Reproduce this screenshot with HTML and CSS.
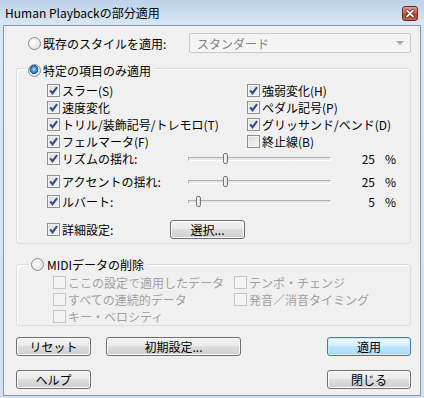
FILE: index.html
```html
<!DOCTYPE html>
<html lang="ja">
<head>
    <meta charset="UTF-8">
    <title>Human Playbackの部分適用</title>
    <link rel="stylesheet" href="styles.css">
</head>
<body>
    <div class="window">
        <div class="titlebar">
            <span class="title">Human Playbackの部分適用</span>
            <span class="close-btn">
                <svg viewBox="0 0 16 15" width="16" height="15">
                    <path d="M5 4.5l6 6M11 4.5l-6 6" stroke="#5a1a10" stroke-width="3.4" stroke-linecap="round"></path>
                    <path d="M5 4.5l6 6M11 4.5l-6 6" stroke="#fff" stroke-width="1.8" stroke-linecap="round"></path>
                </svg>
            </span>
        </div>

        <div class="client">
            <div class="style-row">
                <label class="opt"><span class="radio"></span>既存のスタイルを適用:</label>
                <div class="combo">
                    <span>スタンダード</span>
                    <span class="combo-arrow"></span>
                </div>
            </div>

            <!-- specific items -->
            <div class="group group-items">
                <div class="legend"><span class="radio on"></span>特定の項目のみ適用</div>
                <div class="check-grid">
                    <label class="chk"><span class="box on"></span>スラー(S)</label>
                    <label class="chk"><span class="box on"></span>強弱変化(H)</label>
                    <label class="chk"><span class="box on"></span>速度変化</label>
                    <label class="chk"><span class="box on"></span>ペダル記号(P)</label>
                    <label class="chk"><span class="box on"></span>トリル/装飾記号/トレモロ(T)</label>
                    <label class="chk"><span class="box on"></span>グリッサンド/ベンド(D)</label>
                    <label class="chk"><span class="box on"></span>フェルマータ(F)</label>
                    <label class="chk"><span class="box"></span>終止線(B)</label>
                </div>

                <div class="slider-row">
                    <label class="chk"><span class="box on"></span>リズムの揺れ:</label>
                    <div class="slider"><span class="thumb" style="left: 34px"></span></div>
                    <span class="value">25</span><span class="pct">%</span>
                </div>
                <div class="slider-row row-accent">
                    <label class="chk"><span class="box on"></span>アクセントの揺れ:</label>
                    <div class="slider"><span class="thumb" style="left: 34px"></span></div>
                    <span class="value">25</span><span class="pct">%</span>
                </div>
                <div class="slider-row row-rubato">
                    <label class="chk"><span class="box on"></span>ルバート:</label>
                    <div class="slider"><span class="thumb" style="left: 7px"></span></div>
                    <span class="value">5</span><span class="pct">%</span>
                </div>

                <div class="detail-row">
                    <label class="chk"><span class="box on"></span>詳細設定:</label>
                    <button class="btn btn-select">選択...</button>
                </div>
            </div>

            <!-- MIDI data removal -->
            <div class="group group-midi">
                <div class="legend"><span class="radio"></span>MIDIデータの削除</div>
                <div class="midi-grid">
                    <label class="chk off"><span class="box"></span>ここの設定で適用したデータ</label>
                    <label class="chk off"><span class="box"></span>テンポ・チェンジ</label>
                    <label class="chk off"><span class="box"></span>すべての連続的データ</label>
                    <label class="chk off"><span class="box"></span>発音／消音タイミング</label>
                    <label class="chk off"><span class="box"></span>キー・ベロシティ</label>
                </div>
            </div>

            <div class="btn-row">
                <button class="btn btn-small">リセット</button>
                <button class="btn btn-wide">初期設定...</button>
                <button class="btn btn-right btn-default">適用</button>
            </div>
            <div class="btn-row btn-row-last">
                <button class="btn btn-small">ヘルプ</button>
                <button class="btn btn-right">閉じる</button>
            </div>
        </div>
    </div>
</body>
</html>
```

FILE: styles.css
```css
:root {
    --face: #f0f0f0;
    --text: #000;
    --text-disabled: #a0a0a0;
    --group-line: #d5dfe5;
    --frame-top: #bcd1ea;
    --frame-bottom: #d3e1f1;
}
* { box-sizing: border-box; }
body {
    margin: 0;
    font-family: "Noto Sans CJK JP", "Noto Sans", sans-serif;
    font-size: 12px;
    color: var(--text);
    background: var(--frame-bottom);
}
.window {
    width: 424px;
    height: 398px;
    display: flex;
    flex-direction: column;
    padding: 0 3px 2px 3px;
    background: linear-gradient(var(--frame-top), #d9e6f4 24px, var(--frame-bottom));
}

/* title bar */
.titlebar {
    height: 25px;
    display: flex;
    align-items: flex-start;
    justify-content: space-between;
    padding-left: 2px;
}
.title {
    font-size: 12px;
    line-height: 13px;
    margin-top: 6px;
}
.close-btn {
    width: 16px;
    height: 15px;
    margin-top: 6px;
    margin-right: 3px;
    border: 1px solid #6b2a1e;
    border-radius: 3px;
    background: linear-gradient(#e0a294, #cc6a55 45%, #b8432c 55%, #c8624a);
    display: flex;
}
.close-btn svg { display: block; margin: -1px; }

/* client area */
.client {
    flex: 1;
    background: var(--face);
    border: 1px solid #8597ab;
    padding: 7px 9px 0 12px;
    line-height: 13px;
}
.style-row {
    display: flex;
    align-items: center;
    height: 20px;
}
.opt {
    display: flex;
    align-items: center;
    gap: 2px;
    margin-left: 12px;
}
.radio {
    width: 13px;
    height: 13px;
    border-radius: 50%;
    border: 1px solid #8e8f8f;
    background: radial-gradient(circle at 40% 40%, #fff, #e4e4e4 70%, #d0d0d0);
    flex-shrink: 0;
}
.radio.on {
    background:
        radial-gradient(circle at 45% 40%, #bfe4f8 0, #3a8ad0 30%, #1a4f92 48%, transparent 52%),
        radial-gradient(circle at 40% 40%, #fff, #e4e4e4 70%, #d0d0d0);
}
.combo {
    margin-left: auto;
    width: 222px;
    height: 20px;
    border: 1px solid #c9c9c9;
    border-radius: 2px;
    background: #f4f4f4;
    color: #838383;
    display: flex;
    align-items: center;
    justify-content: space-between;
    padding: 0 5px 0 7px;
}
.combo-arrow {
    width: 0;
    height: 0;
    border-left: 4px solid transparent;
    border-right: 4px solid transparent;
    border-top: 4px solid #a8a8a8;
    margin-right: 1px;
}

/* group boxes */
.group {
    border: 1px solid var(--group-line);
    border-radius: 3px;
    box-shadow: inset 1px 1px 0 #fff;
}
.legend {
    display: flex;
    align-items: center;
    gap: 2px;
    width: fit-content;
    height: 13px;
    background: var(--face);
    padding: 0 3px 0 2px;
}
.group-items { margin-top: 15px; padding: 0 0 4px 30px; }
.group-items .legend { margin: -5px 0 0 -21px; }
.group-midi { margin-top: 20px; padding-left: 36px; }
.group-midi .legend { margin: -7px 0 0 -24px; gap: 3px; }

.check-grid {
    margin-top: 5px;
    display: grid;
    grid-template-columns: 200px auto;
    grid-auto-rows: 17px;
}
.midi-grid {
    margin-top: 3px;
    display: grid;
    grid-template-columns: 181px auto;
    grid-auto-rows: 17px;
}
.chk {
    display: flex;
    align-items: center;
    gap: 2px;
    white-space: nowrap;
}
.chk.off { color: var(--text-disabled); }
.box {
    width: 13px;
    height: 13px;
    border: 1px solid #8e8f8f;
    background: linear-gradient(135deg, #dcdcdc, #f6f6f6);
    box-shadow: inset 0 0 0 1px #f4f4f4;
    flex-shrink: 0;
}
.box.on {
    background:
        url("data:image/svg+xml,%3Csvg xmlns='http://www.w3.org/2000/svg' viewBox='0 0 11 11'%3E%3Cpath d='M2.2 5.4l2.3 2.8 4.6-6' fill='none' stroke='%23334c8e' stroke-width='2.1'/%3E%3C/svg%3E") center / 11px 11px no-repeat,
        linear-gradient(135deg, #dcdcdc, #f6f6f6);
}
.chk.off .box {
    border-color: #c6c6c6;
    background: #f4f4f4;
    box-shadow: none;
}

/* sliders */
.slider-row {
    display: grid;
    grid-template-columns: 141px 143px 44px auto;
    align-items: center;
    height: 17px;
}
.row-accent { margin-top: 6px; }
.row-rubato { margin-top: 3px; }
.slider {
    position: relative;
    height: 4px;
    border-top: 1px solid #b0b0b0;
    border-left: 1px solid #b0b0b0;
    border-bottom: 1px solid #fff;
    border-right: 1px solid #fff;
    background: #e6e6e6;
}
.thumb {
    position: absolute;
    top: -5px;
    width: 5px;
    height: 11px;
    border: 1px solid #777;
    border-radius: 2px;
    background: linear-gradient(90deg, #fafafa, #dedede);
}
.value { text-align: right; }
.pct { margin-left: 10px; }

.detail-row {
    margin-top: 10px;
    display: flex;
    align-items: center;
    height: 19px;
}
.detail-row .chk { width: 123px; }

/* buttons */
.btn {
    font-family: inherit;
    font-size: 12px;
    color: var(--text);
    height: 19px;
    padding: 0;
    line-height: 15px;
    border: 1px solid #707070;
    border-radius: 3px;
    background: linear-gradient(#f2f2f2, #ebebeb 45%, #dddddd 50%, #cfcfcf);
    box-shadow: inset 0 0 0 1px #fbfbfb;
}
.btn-select { width: 75px; }
.btn-small { width: 75px; }
.btn-wide { width: 135px; margin-left: 15px; }
.btn-right { width: 84px; margin-left: auto; }
.btn-default {
    border-color: #3c7fb1;
    background: linear-gradient(#eaf6fd, #d9f0fc 45%, #bee6fd 50%, #a7d9f5);
    box-shadow: inset 0 0 0 1px #c6ecfc;
}
.btn-row {
    display: flex;
    margin-top: 11px;
}
.btn-row-last { margin-top: 14px; }
```
